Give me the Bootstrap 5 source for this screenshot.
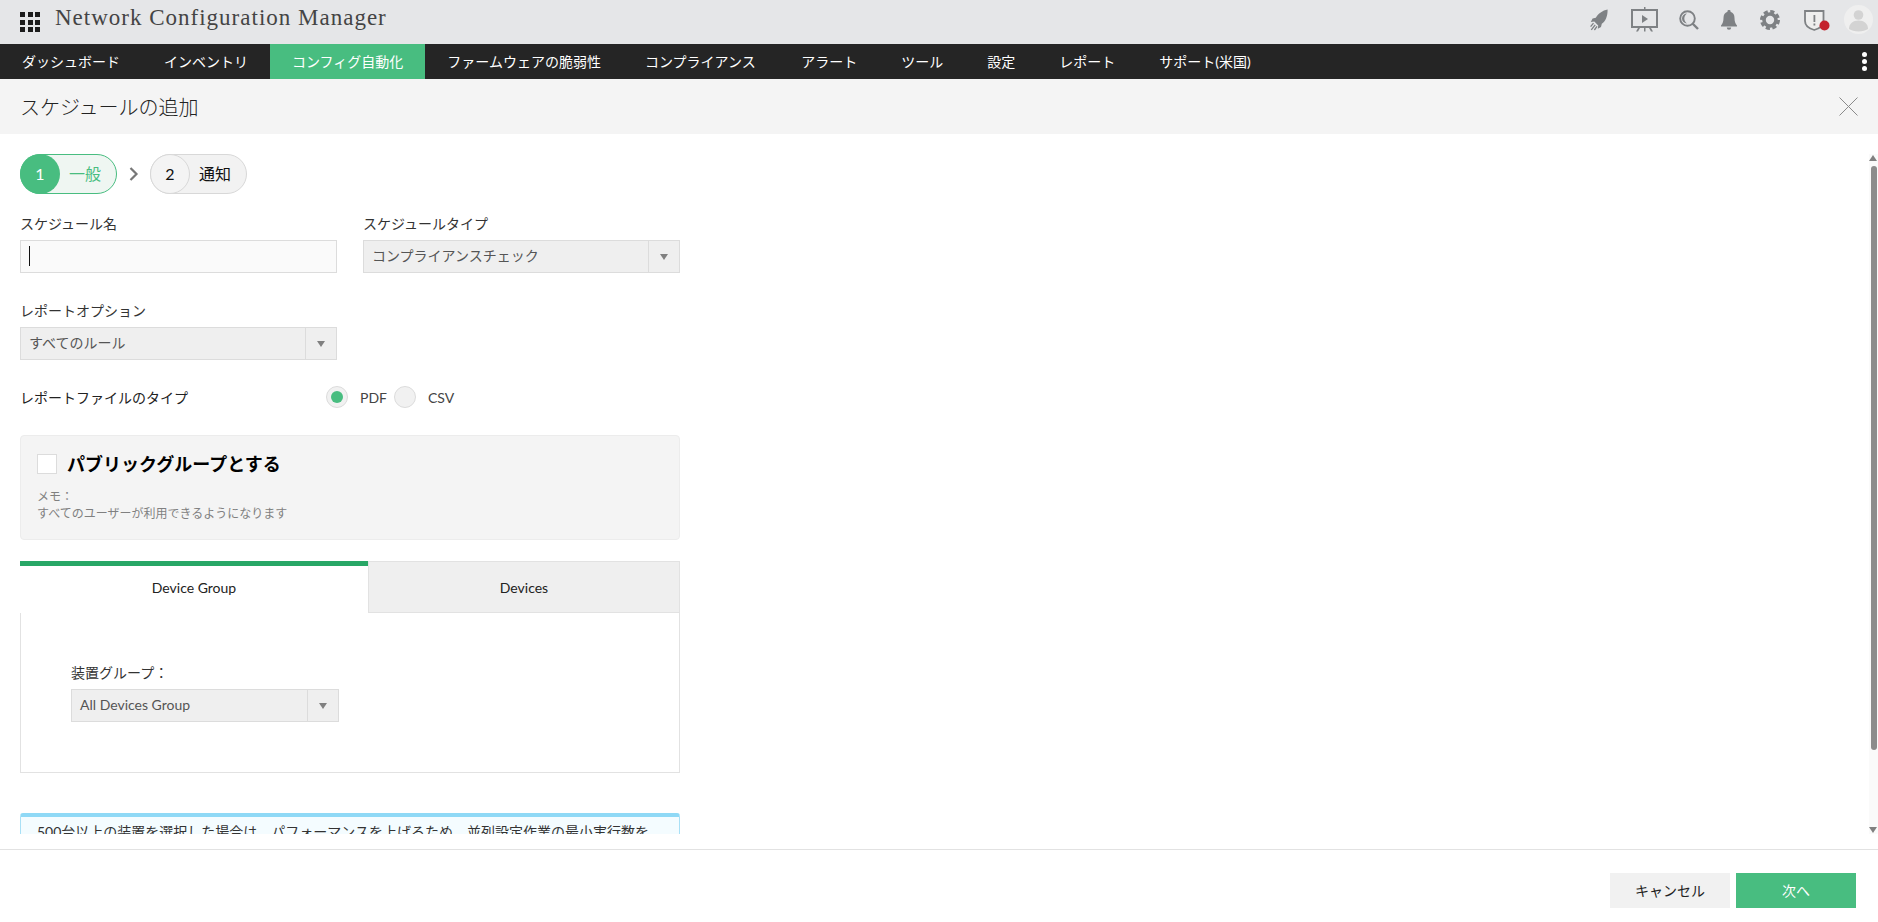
<!DOCTYPE html>
<html lang="ja">
<head>
<meta charset="utf-8">
<title>Network Configuration Manager</title>
<link href="https://cdn.jsdelivr.net/npm/bootstrap@5.3.0/dist/css/bootstrap.min.css" rel="stylesheet">
<style>
html,body{height:100%;overflow:hidden}
body{font-family:Lato,"Noto Sans CJK JP",sans-serif;font-size:14px;color:#222;background:#fff}
.app-shell{height:922px}
.top-head{height:44px;background:#e5e6e8;padding:0 5px 0 20px}
.grid-ico{display:grid;grid-template-columns:repeat(3,5px);gap:2.5px;width:20px;margin-right:15px}
.grid-ico i{height:5px;background:#1c1c1c;display:block}
.app-name{font-family:"Liberation Serif",serif;font-size:23px;color:#444;letter-spacing:1px;line-height:1;margin-top:-9px}
.head-icons svg{display:block;fill:#7e8184}
.avatar-wrap{width:29px;height:29px;border-radius:50%;background:#efefef;overflow:hidden;margin-top:-1px}
.head-icons{margin-top:-5px}
.main-nav{height:35px;background:#252525;padding:0;flex-wrap:nowrap}
.main-nav .nav-link{height:35px;line-height:35px;padding:0 22px;color:#fff;font-size:14px;white-space:nowrap}
.main-nav .nav-link.active{background:#48bd80;color:#fff}
.main-nav .nav-link.wide-end{padding-right:23.500px}
.kebab{width:5px;margin-right:11px}
.kebab i{display:block;width:5px;height:5px;border-radius:50%;background:#fff;margin:2px 0}
.title-bar{height:55px;background:#f4f4f4;padding:0 20px 0 20px}
.title-bar h1{font-size:20px;font-weight:300;margin:0;color:#222}
.scroll-zone{height:700px;overflow:hidden;padding:20px 0 0 20px}
.form-col{width:660px}
.step-pill{width:97px;height:40px;border-radius:20px;border:1px solid #48bd80;background:#eff6f2;font-size:16px;color:#48bd80}
.step-pill.idle{border-color:#d8d8d8;background:#f2f2f2;color:#111}
.step-num{width:40px;height:40px;margin:-1px 9px 0 -1px;border-radius:50%;background:#48bd80;color:#fff;font-size:16px;flex:none}
.idle .step-num{background:#f4f4f4;color:#111;border:1px solid #d8d8d8}
.step-gap{width:33px}
.fld-label{line-height:20px;margin:0 0 6px;color:#333}
.fld-row{margin-top:20px;gap:26px}
.fld-row.next-row{margin-top:28px}
.fld{width:317px}
.txt-box{height:33px;border:1px solid #dcdcdc;background:#fafafa;border-radius:0;padding:0 8px}
.txt-box:focus{box-shadow:none;border-color:#dcdcdc;background:#fafafa}
.caret-line{position:absolute;left:9px;top:6px;width:1px;height:20px;background:#111}
.pick{height:33px;border:1px solid #dcdcdc;background:#efefef;color:#555}
.pick span{flex:1;padding:0 8px 3px}
.pick b{width:31px;height:100%;border-left:1px solid #dcdcdc}
.pick b::after{content:"";border:4px solid transparent;border-top:6px solid #808080;margin-top:5px}
.radio-row{margin-top:26px;height:22px}
.radio-label{width:306px}
.radio-dot{width:22px;height:22px;border-radius:50%;border:1px solid #dcdcdc;background:#f1f1f1}
.radio-dot i{width:12px;height:12px;border-radius:50%;background:#48bd80}
.radio-txt{margin:0 7px 0 12px;color:#444}
.public-box{margin-top:27px;height:105px;background:#f4f4f4;border:1px solid #ececec;border-radius:4px;padding:18px 16px 0}
.check-sq{width:20px;height:20px;background:#fff;border:1px solid #dcdcdc;margin-right:10px}
.public-title{font-size:18px;font-weight:700;color:#000;line-height:20px}
.memo{font-size:12px;line-height:17px;color:#808080;margin-top:14px}
.tab-wrap{margin-top:21px;height:212px;border:1px solid #e2e2e2;border-top:0}
.tab-item{height:52px;flex:none;color:#222}
.tab-item.on{width:348px;margin-left:-1px;border-top:5px solid #28a766;background:#fff;padding-bottom:5px}
.tab-item.off{width:312px;margin-right:-1px;background:#efefef;border:1px solid #e2e2e2}
.tab-body{padding:50px 0 0 50px}
.tab-body .fld-label{margin-bottom:6px}
.tab-body .pick{width:268px}
.info-note{margin-top:40px;border:1px solid #a9e0f6;border-top:4px solid #8fd9f6;border-radius:3px 3px 0 0;background:#f4fcff;padding:5px 16px;line-height:20px;color:#333;white-space:nowrap}
.fake-bar{position:absolute;right:0;top:154px;width:9px;height:680px;background:#fafafa}
.fake-bar i{position:absolute;left:2px;width:6px;top:12px;height:584px;background:#8c8c8c;border-radius:3px}
.fake-bar u{position:absolute;left:0;width:0;border:4.500px solid transparent}
.fake-bar u.up{top:-3px;border-bottom:6px solid #808080}
.fake-bar u.dn{bottom:-3px;border-top:6px solid #808080}
.foot-bar{margin-top:15px;height:73px;border-top:1px solid #e2e2e2;padding:23px 22px 0 0;gap:6px}
.foot-btn{width:120px;height:35px;padding:0;border:0;border-radius:0;font-size:14px;background:#f1f1f1;color:#222}
.foot-btn.go{background:#48bd80;color:#fff}
</style>
</head>
<body>
<div class="app-shell d-flex flex-column position-relative">
  <header class="top-head d-flex align-items-center">
    <div class="grid-ico"><i></i><i></i><i></i><i></i><i></i><i></i><i></i><i></i><i></i></div>
    <div class="app-name">Network Configuration Manager</div>
    <div class="head-icons ms-auto d-flex align-items-center">
      <svg width="18" height="22" viewBox="0 0 18 22" style="margin-right:23px"><path d="M17.600.4C12.500 1.300 8.300 4.400 5.800 8.800L2.600 9.600.8 12.900l3.500-.4 3.900 3.900-.4 3.300 3.200-1.800.8-3.200C15.600 12.300 17.700 6.900 17.600.4z"/><path d="M3.500 14.200 .6 17.600M5.200 15.800 1.300 20.800M7 17.400 4.400 21" stroke="#7e8184" stroke-width="1.300" fill="none"/></svg>
      <svg width="27" height="25" viewBox="0 0 27 25" style="margin-right:21px"><rect x="1" y="3" width="25" height="17" fill="none" stroke="#7e8184" stroke-width="2"/><path d="M13 0h1.500v3H13zM11 8l6 4-6 4z"/><path d="M7 21h2l-2 3.500H5zM13 21h1.500v3.500H13zM18 21h2l2 3.500h-2z"/></svg>
      <svg width="20" height="20" viewBox="0 0 20 20" style="margin-right:22px"><circle cx="8.500" cy="8.500" r="7.300" fill="none" stroke="#7e8184" stroke-width="1.900"/><path d="M8 3.500A5 5 0 0 0 8 13.500 6 6 0 0 1 8 3.500z"/><path d="M13.500 13.500 19 19" stroke="#7e8184" stroke-width="2.400"/></svg>
      <svg width="16" height="20" viewBox="0 0 16 20" style="margin-right:23px"><path d="M8 0a1.500 1.500 0 0 1 1.500 1.800C12.300 2.600 13.500 5 13.500 8c0 3.500.8 5.500 2.500 7.500v1H0v-1c1.700-2 2.500-4 2.500-7.500 0-3 1.200-5.400 4-6.200A1.500 1.500 0 0 1 8 0zM5.800 17.500h4.400a2.200 2.200 0 0 1-4.400 0z"/></svg>
      <svg width="20" height="20" viewBox="0 0 20 20" style="margin-right:24px"><circle cx="10" cy="10" r="6" fill="none" stroke="#7e8184" stroke-width="3.600"/><circle cx="10" cy="10" r="8.600" fill="none" stroke="#7e8184" stroke-width="2.800" stroke-dasharray="4.200 2.550"/></svg>
      <svg width="26" height="24" viewBox="0 0 26 24" style="margin-right:14px;margin-top:2px"><path d="M1 2h18.500v10c0 4.500-4 7.500-9.250 9C5 19.500 1 16.500 1 12z" fill="#eeeeee" stroke="#7e8184" stroke-width="1.800"/><path d="M9.500 6h1.800v7H9.500zM9.500 14.500h1.800v2H9.500z"/><circle cx="20.500" cy="16.500" r="5" style="fill:#c4222d"/></svg>
      <div class="avatar-wrap"><svg width="29" height="29" viewBox="0 0 29 29" style="fill:#d3d3d3"><circle cx="14.500" cy="10" r="4.800"/><path d="M5 24c0-5.500 4-8.500 9.500-8.500S24 18.500 24 24c-2.500 1.500-5.500 2.500-9.500 2.500S7.500 25.500 5 24z"/></svg></div>
    </div>
  </header>

  <nav class="main-nav nav align-items-center">
    <a class="nav-link" href="#">ダッシュボード</a>
    <a class="nav-link" href="#">インベントリ</a>
    <a class="nav-link active" href="#">コンフィグ自動化</a>
    <a class="nav-link" href="#">ファームウェアの脆弱性</a>
    <a class="nav-link wide-end" href="#">コンプライアンス</a>
    <a class="nav-link" href="#">アラート</a>
    <a class="nav-link" href="#">ツール</a>
    <a class="nav-link" href="#">設定</a>
    <a class="nav-link" href="#">レポート</a>
    <a class="nav-link" href="#">サポート(米国)</a>
    <div class="kebab ms-auto"><i></i><i></i><i></i></div>
  </nav>

  <div class="title-bar d-flex align-items-center justify-content-between">
    <h1>スケジュールの追加</h1>
    <svg width="19" height="19" viewBox="0 0 19 19"><path d="M.5.500l18 18M18.500.500l-18 18" stroke="#8a8a8a" stroke-width="1" fill="none"/></svg>
  </div>

  <div class="scroll-zone">
    <div class="form-col">
      <div class="d-flex align-items-center">
        <div class="step-pill d-flex align-items-center"><span class="step-num d-flex align-items-center justify-content-center">1</span><span>一般</span></div>
        <div class="step-gap d-flex justify-content-center"><svg width="10" height="14" viewBox="0 0 10 14"><path d="M1.500 1l6 6-6 6" fill="none" stroke="#777" stroke-width="2.200"/></svg></div>
        <div class="step-pill idle d-flex align-items-center"><span class="step-num d-flex align-items-center justify-content-center">2</span><span>通知</span></div>
      </div>

      <div class="fld-row d-flex">
        <div class="fld">
          <p class="fld-label">スケジュール名</p>
          <div class="position-relative"><input class="form-control txt-box" type="text" aria-label="スケジュール名"><span class="caret-line"></span></div>
        </div>
        <div class="fld">
          <p class="fld-label">スケジュールタイプ</p>
          <div class="pick d-flex align-items-center"><span>コンプライアンスチェック</span><b class="d-flex align-items-center justify-content-center"></b></div>
        </div>
      </div>

      <div class="fld-row next-row d-flex">
        <div class="fld">
          <p class="fld-label">レポートオプション</p>
          <div class="pick d-flex align-items-center"><span>すべてのルール</span><b class="d-flex align-items-center justify-content-center"></b></div>
        </div>
      </div>

      <div class="radio-row d-flex align-items-center">
        <div class="radio-label">レポートファイルのタイプ</div>
        <div class="radio-dot d-flex align-items-center justify-content-center"><i></i></div><span class="radio-txt">PDF</span>
        <div class="radio-dot"></div><span class="radio-txt">CSV</span>
      </div>

      <div class="public-box">
        <div class="d-flex align-items-center"><div class="check-sq"></div><div class="public-title">パブリックグループとする</div></div>
        <div class="memo">メモ：<br>すべてのユーザーが利用できるようになります</div>
      </div>

      <div class="tab-wrap">
        <div class="d-flex">
          <div class="tab-item on d-flex align-items-center justify-content-center">Device Group</div>
          <div class="tab-item off d-flex align-items-center justify-content-center">Devices</div>
        </div>
        <div class="tab-body">
          <p class="fld-label">装置グループ：</p>
          <div class="pick d-flex align-items-center"><span>All Devices Group</span><b class="d-flex align-items-center justify-content-center"></b></div>
        </div>
      </div>

      <div class="info-note">500台以上の装置を選択した場合は、パフォーマンスを上げるため、並列設定作業の最小実行数を、</div>
    </div>
  </div>

  <div class="fake-bar"><u class="up"></u><i></i><u class="dn"></u></div>

  <footer class="foot-bar d-flex justify-content-end">
    <button class="btn foot-btn" type="button">キャンセル</button>
    <button class="btn foot-btn go" type="button">次へ</button>
  </footer>
</div>
<script src="https://cdn.jsdelivr.net/npm/bootstrap@5.3.0/dist/js/bootstrap.bundle.min.js"></script>
</body>
</html>
